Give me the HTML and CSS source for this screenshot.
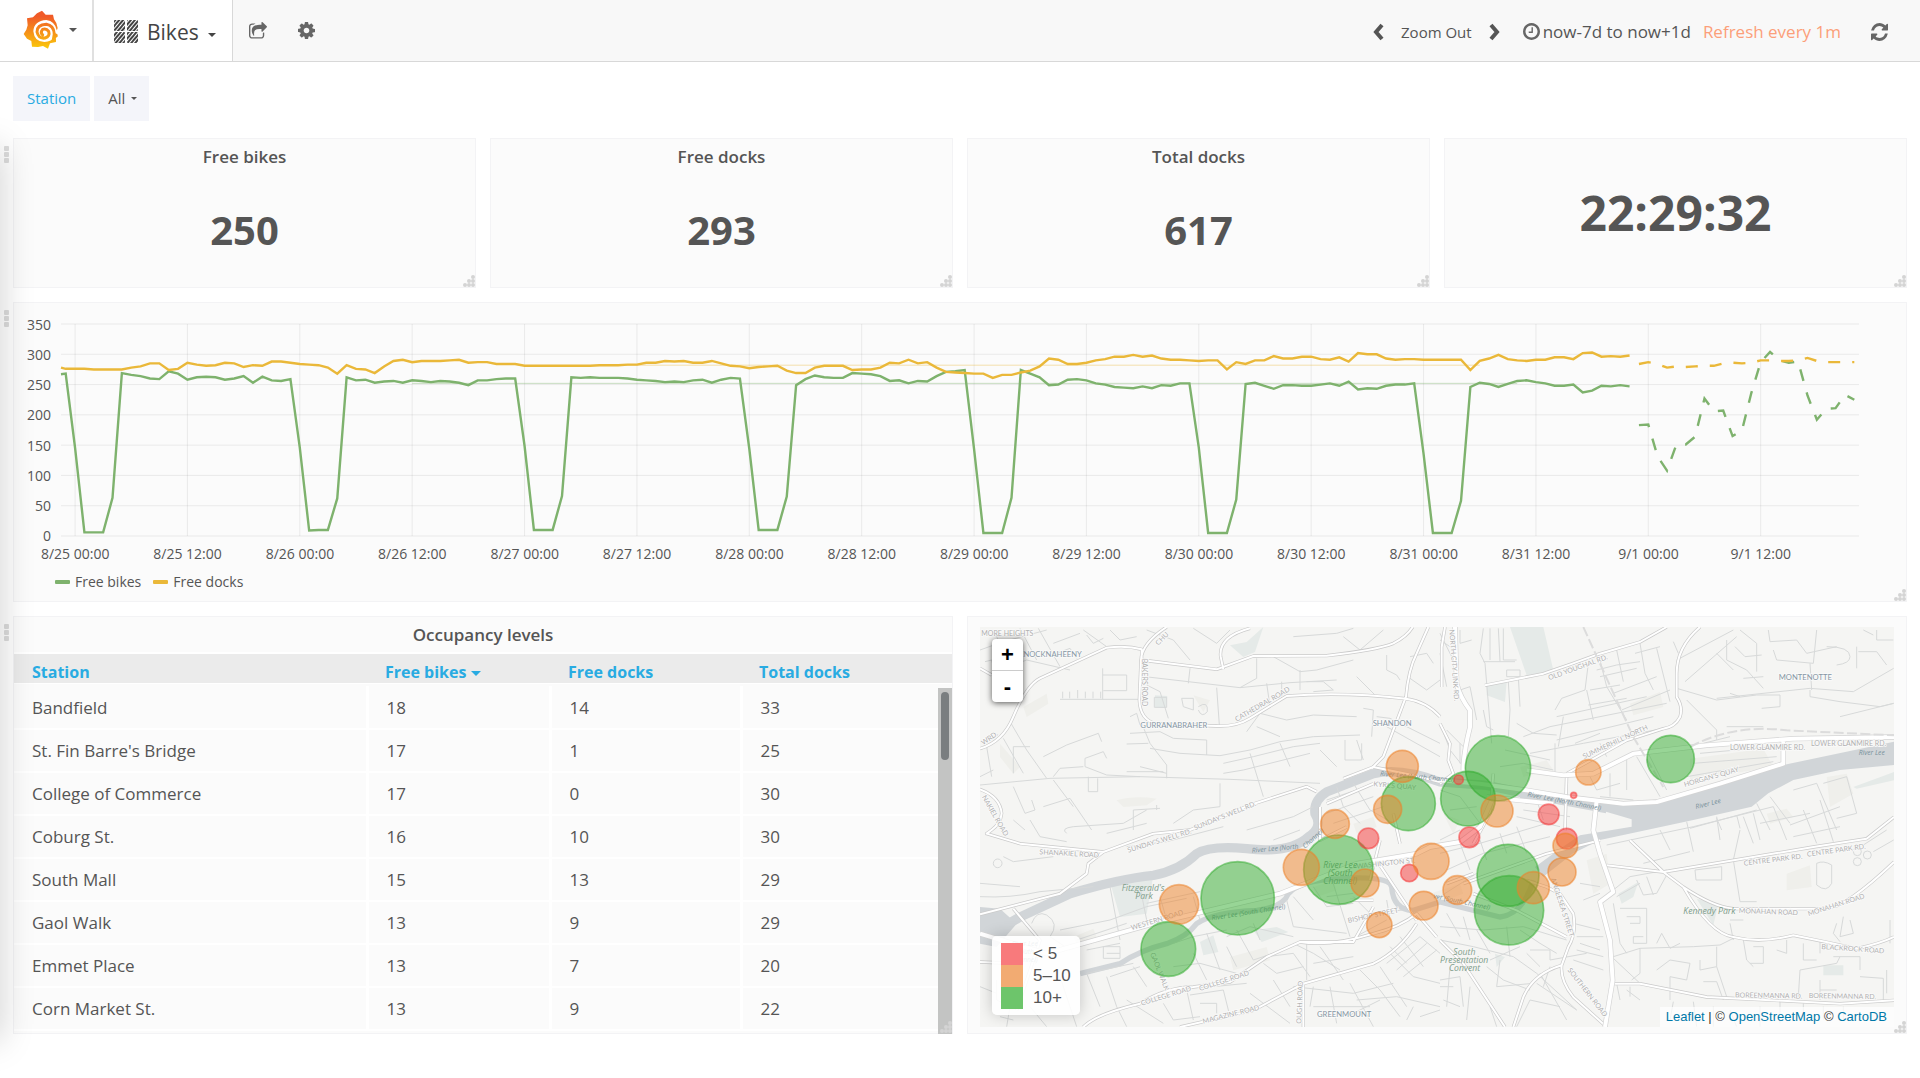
FILE: index.html
```html
<!DOCTYPE html>
<html lang="en">
<head>
<meta charset="utf-8">
<title>Bikes</title>
<link rel="stylesheet" href="styles.css">
</head>
<body>
<svg class="defs" width="0" height="0" aria-hidden="true">
  <defs>
    <symbol id="grip" viewBox="0 0 12 12"><g fill="#d4d4d4"><circle cx="2" cy="10" r="2"/><circle cx="6" cy="10" r="2"/><circle cx="10" cy="10" r="2"/><circle cx="6" cy="6" r="2"/><circle cx="10" cy="6" r="2"/><circle cx="10" cy="2" r="2"/></g></symbol>
    <linearGradient id="flame" x1="0" y1="0" x2="0" y2="1"><stop offset="0.15" stop-color="#f05a28"/><stop offset="1" stop-color="#fbca0a"/></linearGradient>
    <linearGradient id="swirl" gradientUnits="userSpaceOnUse" x1="0" y1="30" x2="0" y2="144"><stop offset="0.15" stop-color="#f05a28"/><stop offset="1" stop-color="#fbca0a"/></linearGradient>
    <pattern id="hatch" width="3" height="3" patternUnits="userSpaceOnUse" patternTransform="rotate(40)"><rect width="2" height="3" fill="#444"/></pattern>
  </defs>
</svg>

<header class="navbar">
  <button class="nav-logo" type="button" aria-label="Main menu">
    <svg width="36" height="39" viewBox="70 28 108 117">
      <path fill="url(#flame)" d="M127 30L138 42L160 42L163 56Q173 68 174 82L169 97L174 107L168 112L169 124L151 128L145 144L130 136L115 139L97 138L95 121L82 114L72 100L80 87L84 74L82 53L100 50L112 38Z"/>
      <path fill="#fff" d="M171 88Q166 62 140 58Q103 60 101 92Q104 124 134 124Q156 124 165 107L176 98Z"/>
      <path fill="none" stroke="url(#swirl)" stroke-width="9" stroke-linecap="round" d="M164 100Q162 74 140 71Q112 72 112 94Q117 115 136 112Q152 107 147 92Q140 82 129 86Q121 96 129 103"/>
      <path fill="url(#swirl)" d="M160 96L173 100L174 107L168 112L169 122L156 120Z"/>
    </svg>
    <span class="caret"></span>
  </button>
  <button class="nav-board" type="button">
    <svg width="24" height="24" viewBox="0 0 24 24"><g fill="url(#hatch)"><rect width="11" height="11" rx="1"/><rect x="13" width="11" height="11" rx="1"/><rect y="12" width="11" height="11" rx="1"/><rect x="13" y="12" width="11" height="11" rx="1"/></g></svg>
    <span>Bikes</span><span class="caret"></span>
  </button>
  <button class="nav-icon" type="button" aria-label="Share">
    <svg width="18" height="18" viewBox="0 0 1664 1664"><path d="M1408 989v259q0 119-84 203t-204 85h-832q-119 0-203-85t-85-203v-832q0-119 85-203t203-85h255q13 0 23 10t9 22q0 27-26 32-77 26-133 60-10 4-16 4h-112q-66 0-113 47t-47 113v832q0 66 47 113t113 47h832q66 0 113-47t47-113v-214q0-19 18-29 28-13 54-37 16-16 35-8 21 9 21 31zM1645 493l-384 384q-18 19-45 19-12 0-25-5-39-17-39-59v-192h-160q-323 0-438 131-119 137-74 473 3 23-20 34-8 2-12 2-16 0-26-13-10-14-21-31t-40-69-49-99-39-114-17-122q0-49 3-91t14-90 28-88 47-82 69-74 94-61 125-49 159-30 197-11h160v-192q0-42 39-59 13-5 25-5 26 0 45 19l384 384q19 19 19 45t-19 45z"/></svg>
  </button>
  <button class="nav-icon" type="button" aria-label="Settings">
    <svg width="17" height="17" viewBox="0 -128 1536 1536"><path fill-rule="evenodd" d="M1024 640q0 106-75 181t-181 75-181-75-75-181 75-181 181-75 181 75 75 181zM1536 531v222q0 12-8 23t-20 13l-185 28q-19 54-39 91 35 50 107 138 10 12 10 25t-9 23q-27 37-99 108t-94 71q-12 0-26-9l-138-108q-44 23-91 38-16 136-29 186-7 28-36 28h-222q-14 0-24.500-8.500t-11.500-21.500l-28-184q-49-16-90-37l-141 107q-10 9-25 9-14 0-25-11-126-114-165-168-7-10-7-23 0-12 8-23 15-21 51-66.500t54-70.500q-27-50-41-99l-183-27q-13-2-21-12.500t-8-23.500v-222q0-12 8-23t19-13l186-28q14-46 39-92-40-57-107-138-10-12-10-24 0-10 9-23 26-36 98.500-107.500t94.500-71.500q13 0 26 10l138 107q44-23 91-38 16-136 29-186 7-28 36-28h222q14 0 24.500 8.500t11.500 21.500l28 184q49 16 90 37l142-107q9-9 24-9 13 0 25 10 129 119 165 170 7 8 7 22 0 12-8 23-15 21-51 66.500t-54 70.500q26 50 41 98l183 28q13 2 21 12.500t8 23.500z"/></svg>
  </button>
  <div class="time-controls">
    <button type="button" aria-label="Back"><svg width="11" height="18" viewBox="0 0 11 18"><path class="chevron" d="M9 2L3 9l6 7"/></svg></button>
    <button class="zoom-out" type="button">Zoom Out</button>
    <button type="button" aria-label="Forward"><svg width="11" height="18" viewBox="0 0 11 18"><path class="chevron" d="M2 2l6 7-6 7"/></svg></button>
    <button class="range" type="button">
      <svg width="17" height="17" viewBox="0 128 1536 1536"><path d="M896 544v448q0 14-9 23t-23 9h-320q-14 0-23-9t-9-23v-64q0-14 9-23t23-9h224v-352q0-14 9-23t23-9h64q14 0 23 9t9 23zm416 352q0-148-73-273t-198-198-273-73-273 73-198 198-73 273 73 273 198 198 273 73 273-73 198-198 73-273zm224 0q0 209-103 385.500t-279.500 279.500-385.500 103-385.500-103-279.500-279.500-103-385.500 103-385.500 279.500-279.500 385.500-103 385.500 103 279.500 279.500 103 385.500z"/></svg>
      <span>now-7d to now+1d</span><span class="refresh-rate">Refresh every 1m</span>
    </button>
    <button class="refresh" type="button" aria-label="Refresh"><svg width="17" height="18" viewBox="0 0 1536 1536" preserveAspectRatio="none"><path d="M1511 928q0 5-1 7-64 268-268 434.500t-478 166.500q-146 0-282.500-55t-243.500-157l-129 129q-19 19-45 19t-45-19-19-45v-448q0-26 19-45t45-19h448q26 0 45 19t19 45-19 45l-137 137q71 66 161 102t187 36q134 0 250-65t186-179q11-17 53-117 8-23 30-23h192q13 0 22.500 9.500t9.500 22.500zm25-800v448q0 26-19 45t-45 19h-448q-26 0-45-19t-19-45 19-45l138-138q-148-137-349-137-134 0-250 65t-186 179q-11 17-53 117-8 23-30 23h-199q-13 0-22.500-9.500t-9.500-22.500v-7q65-268 270-434.500t480-166.500q146 0 284 55.500t245 156.500l130-129q19-19 45-19t45 19 19 45z"/></svg></button>
  </div>
</header>

<main class="dashboard">
  <div class="submenu">
    <span class="filter-label" id="station-label">Station</span>
    <button class="filter-value" type="button" aria-labelledby="station-label">All <span class="caret small"></span></button>
  </div>

  <section class="row">
    <div class="handle"><i></i><i></i><i></i></div>
    <article class="panel stat"><h2>Free bikes</h2><p>250</p><svg class="grip"><use href="#grip"/></svg></article>
    <article class="panel stat"><h2>Free docks</h2><p>293</p><svg class="grip"><use href="#grip"/></svg></article>
    <article class="panel stat"><h2>Total docks</h2><p>617</p><svg class="grip"><use href="#grip"/></svg></article>
    <article class="panel clock"><p>22:29:32</p><svg class="grip"><use href="#grip"/></svg></article>
  </section>

  <section class="row">
    <div class="handle"><i></i><i></i><i></i></div>
    <article class="panel graph">
      <div class="plot">
        <div class="y-axis"><span>350</span><span>300</span><span>250</span><span>200</span><span>150</span><span>100</span><span>50</span><span>0</span></div>
        <svg class="chart" viewBox="0 0 192 350" preserveAspectRatio="none">
          <g transform="translate(1.5 350) scale(1 -1)">
            <path class="gridline" d="M-1.500 0H190.500M-1.500 50H190.500M-1.500 100H190.500M-1.500 150H190.500M-1.500 200H190.500M-1.500 250H190.500M-1.500 300H190.500M-1.500 350H190.500M0 0V350M12 0V350M24 0V350M36 0V350M48 0V350M60 0V350M72 0V350M84 0V350M96 0V350M108 0V350M120 0V350M132 0V350M144 0V350M156 0V350M168 0V350M180 0V350"/>
            <path class="trend bikes" d="M36 252H154"/>
            <path class="trend docks" d="M58 282H150"/>
            <polyline class="series bikes" points="-1.500,267 -1,268 0,146 1,6 3,6 4,63 5,269 6,266 7,264 8,260 9,259 10,272 11,268 12,258 13,262 14,263 15,262 16,258 17,260 18,264 19,253 20,263 21,257 22,256 23,259 24,146 25,9 26,10 27,10 28,62 29,262 30,257 31,258 32,253 33,255 34,256 35,253 36,257 37,256 38,254 39,256 40,255 41,253 42,249 43,257 44,257 45,259 46,260 47,260 48,149 49,10 51,10 52,66 53,262 54,261 55,262 56,261 57,261 58,261 59,260 60,258 61,257 62,256 63,254 64,255 65,254 66,257 67,258 68,253 69,258 70,261 71,260 72,144 73,10 75,10 76,65 77,249 78,259 79,265 80,262 81,261 82,261 83,269 84,268 85,267 86,264 87,256 88,257 89,252 90,256 91,255 92,264 93,271 94,272 95,274 96,144 97,5 99,5 100,63 101,274 102,268 103,262 104,249 105,250 106,258 107,259 108,257 109,252 110,250 111,246 112,245 113,244 114,247 115,244 116,249 117,248 118,252 119,252 120,146 121,5 123,5 124,60 125,251 126,253 127,248 128,243 129,249 130,249 131,248 132,248 133,250 134,252 135,248 136,255 137,242 138,244 139,243 140,248 141,250 142,250 143,252 144,136 145,5 147,5 148,58 149,246 150,253 151,251 152,246 153,251 154,256 155,257 156,254 157,252 158,248 159,248 160,250 161,237 162,240 163,248 164,247 165,249 166,247"/>
            <polyline class="series docks" points="-1.500,278 -1,276 0,276 1,276 2,275 5,275 6,278 7,280 8,285 9,285 10,274 11,276 12,286 13,283 14,281 15,282 16,286 17,285 18,279 19,282 20,281 21,288 22,288 23,286 24,284 25,283 26,282 27,278 28,268 29,282 30,276 31,275 32,269 33,280 34,289 35,291 36,287 37,289 38,289 39,289 40,290 41,291 42,286 43,287 44,287 45,284 46,284 47,284 48,281 49,281 55,281 56,282 58,282 59,283 60,283 61,286 62,286 63,289 64,288 65,289 66,286 67,286 68,289 69,285 70,281 71,280 72,277 73,279 74,280 75,281 76,273 77,269 78,269 79,278 80,281 82,281 83,274 84,275 85,275 86,278 87,286 88,285 89,291 90,285 91,287 92,278 93,271 94,270 95,269 96,268 97,268 98,261 99,266 100,266 101,270 102,273 103,280 104,293 105,291 106,284 107,284 108,286 109,290 110,292 111,296 112,296 113,299 114,296 115,298 116,293 117,291 118,291 119,290 120,289 121,290 122,290 123,275 124,287 125,284 126,290 127,290 128,297 129,293 130,293 131,296 132,296 133,292 134,291 135,295 136,288 137,302 138,300 139,300 140,293 141,291 142,292 143,292 144,291 148,291 149,274 150,289 151,293 152,299 153,292 154,290 155,289 156,291 157,291 158,295 159,295 160,292 161,302 162,303 163,296 164,297 165,296 166,298"/>
            <polyline class="series bikes forecast" points="167,183 168,184 169,131 170,108 171,151 172,151 173,164 174,227 175,206 176,207 177,165 178,174 179,236 180,287 181,304 182,290 183,286 184,288 185,232 186,192 187,210 188,211 189,233 190,225"/>
            <polyline class="series docks forecast" points="167,284 168,287 169,284 170,278 171,280 172,279 173,280 174,281 175,281 176,285 177,286 178,285 179,286 180,290 181,290 182,289 183,289 184,290 185,294 186,289 187,287 188,287 189,287 190,287"/>
          </g>
        </svg>
      </div>
      <div class="x-axis"><span>8/25 00:00</span><span>8/25 12:00</span><span>8/26 00:00</span><span>8/26 12:00</span><span>8/27 00:00</span><span>8/27 12:00</span><span>8/28 00:00</span><span>8/28 12:00</span><span>8/29 00:00</span><span>8/29 12:00</span><span>8/30 00:00</span><span>8/30 12:00</span><span>8/31 00:00</span><span>8/31 12:00</span><span>9/1 00:00</span><span>9/1 12:00</span></div>
      <ul class="legend"><li class="bikes">Free bikes</li><li class="docks">Free docks</li></ul>
      <svg class="grip"><use href="#grip"/></svg>
    </article>
  </section>

  <section class="row">
    <div class="handle"><i></i><i></i><i></i></div>
    <article class="panel occupancy">
      <h2>Occupancy levels</h2>
      <div class="table-area">
        <table>
          <colgroup><col class="c-station"><col class="c-bikes"><col class="c-docks"><col class="c-total"></colgroup>
          <thead><tr><th scope="col">Station</th><th scope="col">Free bikes <span class="caret sort"></span></th><th scope="col">Free docks</th><th scope="col">Total docks</th></tr></thead>
          <tbody>
            <tr><td>Bandfield</td><td>18</td><td>14</td><td>33</td></tr>
            <tr><td>St. Fin Barre's Bridge</td><td>17</td><td>1</td><td>25</td></tr>
            <tr><td>College of Commerce</td><td>17</td><td>0</td><td>30</td></tr>
            <tr><td>Coburg St.</td><td>16</td><td>10</td><td>30</td></tr>
            <tr><td>South Mall</td><td>15</td><td>13</td><td>29</td></tr>
            <tr><td>Gaol Walk</td><td>13</td><td>9</td><td>29</td></tr>
            <tr><td>Emmet Place</td><td>13</td><td>7</td><td>20</td></tr>
            <tr><td>Corn Market St.</td><td>13</td><td>9</td><td>22</td></tr>
          </tbody>
        </table>
        <div class="scrollbar"><div class="thumb"></div></div>
      </div>
      <svg class="grip"><use href="#grip"/></svg>
    </article>

    <article class="panel map-panel">
      <div class="map">
        <svg class="tiles" viewBox="0 0 2742 1200" preserveAspectRatio="xMidYMid slice">
          <!-- parks and buildings -->
          <g class="park">
            <path d="M800 45L850 0L825 75L790 90L750 55ZM1590 0H1690L1720 130L1640 145ZM1520 170L1580 165L1575 225L1520 205ZM525 205L562 207L558 243L525 240ZM390 765L520 745L500 860L420 870ZM820 910L890 900L925 915L845 945ZM2150 815L2215 830L2200 895ZM2530 1015H2590V1045H2530ZM1915 800L1975 765L1960 810L1925 830ZM660 945L700 925L715 975L670 985ZM1545 980L1575 990L1550 1020ZM2620 480L2742 435V460L2630 485Z"/>
          </g>
          <g class="building">
            <path d="M130 240L200 200L205 230L140 270ZM410 520Q460 505 530 515L500 535L430 540ZM640 205L690 220L670 255ZM2420 740L2490 715L2495 780L2420 790ZM1820 700L1880 680L1890 770L1840 800ZM2540 450L2600 440L2620 500L2550 540ZM2360 560L2420 545L2440 570L2370 590ZM1950 230L2040 195L2050 240L1960 265ZM1000 780L1060 760L1070 790L1010 810ZM750 990L860 960L870 1000L760 1030ZM280 930L340 905L350 930L290 955ZM1120 590L1180 570L1190 600L1130 620ZM1390 560L1440 580L1420 620ZM1350 800L1440 770L1450 800L1370 830ZM1620 420L1700 400L1720 430L1630 450ZM60 350L120 420L100 440L60 390ZM2130 395L2350 365L2380 420L2130 460Z"/>
          </g>
          <!-- river Lee -->
          <g class="river">
            <path class="channel" d="M0 905Q50 915 120 870L270 800Q420 755 520 745Q600 730 650 680Q690 655 800 665Q930 680 985 630Q1030 600 1005 560Q1000 520 1040 495L1180 440Q1260 420 1380 465L1520 475L1640 500L1880 545"/>
            <path class="creek" d="M300 1040L420 1010Q480 970 560 950Q620 930 650 890Q700 855 830 850Q910 840 925 800Q960 760 1080 755Q1230 745 1235 780Q1240 850 1300 850L1380 825L1560 870Q1630 860 1660 760"/>
            <path class="basin" d="M1620 490L1860 519L1940 534L2030 527L2220 474L2410 414L2742 344V414L2580 429L2440 459L2365 499L2315 539L2140 579L1860 639L1780 679L1690 749L1665 720L1740 665L1800 625L1955 599V577L1860 549L1620 515ZM0 840L60 845L110 890L50 960L0 950Z"/>
          </g>
          <!-- local streets -->
          <g class="street">
            <g transform="translate(-60 -51)">
              <path d="M60 120L130 95L260 60M100 60L150 160M180 55L230 150M235 55L300 170M280 100L360 70M290 130L330 115L350 145M370 60L440 110M380 75L400 100L430 85M75 155L95 150L100 170M120 180L200 150L330 180M300 268H535M308 245V265M329 245V265M353 240V265M376 245V265M399 245V265M422 245V265M428 175V268M428 195H500V242H430M555 200L840 233L990 218L1130 210M690 175L685 220M770 233L778 345M840 233L890 205V145M920 220L930 290M965 215V265M560 225L600 245L625 325M583 262H620V292H583ZM665 265H700V300L670 290ZM715 290Q745 270 742 305Q725 325 715 300M545 340L570 400L620 465V505M510 370L600 365L640 385L740 390V435M500 402L565 400M510 320L530 310L540 345M150 335L200 420L260 505M60 525L270 505L540 500L810 508L1080 520M130 385L190 490M80 410L95 500M250 440L320 405L415 370L425 395M375 445L430 425L440 445M375 445V470L440 495L540 500M280 500L300 475L370 470M570 415L660 430L780 437L870 420L960 395L1060 380L1200 375M790 460L880 440L1000 410L1080 400M790 490L850 480L1050 430M870 430L910 560M960 400L990 470M860 365L900 310L980 330L1060 315L1190 320M890 350L960 380M1020 180V240M940 140L1020 185L1070 180L1180 150M1040 215H1090L1120 240L1060 245M1000 80L1130 70L1180 55M1150 80L1200 120L1270 60M1280 135V180L1310 195L1320 210M1190 200L1250 260M1350 140L1400 130L1420 160M1350 205L1400 240L1440 210M1210 295L1240 300L1235 380M1250 320L1290 325L1340 350L1440 400M1280 350L1440 440M1190 390L1210 450M1080 420L1130 470M1155 390V450H1205V400M160 530L195 610L225 600L215 570M250 590L330 565L395 660M280 510L340 590M385 500V545H413V505M520 660V600L600 595M590 585V600M640 640L700 600L780 590V520M60 500L100 480M160 490V410H210M700 55L770 100L810 60M560 60L640 90L690 150M450 60L480 90L530 80M540 470L620 490M500 485L610 485M1130 530L1150 590L1200 640M1180 520L1230 600L1300 640M1100 570L1220 530M1100 610L1240 560M1120 640L1270 590"/>
            </g>
            <g transform="translate(1380 -51)">
              <path d="M0 90L30 110M60 60V100L95 90M130 55L120 130L135 160L140 220L155 400M150 55V150M175 55L180 155M190 55V150H230M130 155H225M200 180H240V200H200ZM205 215L210 300L205 380M235 200L240 290M445 160L435 240L365 265L345 300M470 180L530 165L600 155M480 200L590 175M530 120L550 215M600 100L615 190L640 240M650 115L690 275M480 150L500 230L560 330M585 130L660 110M520 250L650 200M545 300L690 240M450 240L540 225M445 285L560 265M440 240L460 330M350 320L620 260M330 350L680 280M350 390L640 320M250 380L330 350M230 340L280 370L350 375M270 430L430 400L700 350M370 320L355 410M345 400V490M405 400L480 370M480 400L500 440M735 215L890 80M710 235L830 270L950 255H1020V290L965 295M710 150L880 60M740 270L830 360V390M700 95L715 130M860 90V150L920 180L970 235M885 110L915 140L965 135M830 130L880 180M900 60L950 100V185M910 205L970 200M985 60L990 95L1070 90M1000 120L1010 150L1120 160L1130 60M1070 90L1100 130L1190 110M1160 110Q1230 110 1230 140Q1230 160 1190 165M1250 110V175M1255 125H1310L1340 165M1270 60L1300 75M1310 60V90H1360M830 265L1110 235L1240 245L1361 175M1110 240V260L1200 275L1320 290L1361 280M1200 320L1361 280M1110 160L1115 240M870 250L900 260M790 400L870 380M860 350L970 350M780 430L1000 410M760 460L1010 440M740 500L1000 455M620 420L680 540M590 440L660 560M560 450V540M510 490V560M450 500L470 540L540 520M480 560L580 570M950 580L990 660M990 560L1050 640M1060 540L1130 520L1190 660M1150 520L1220 500L1250 610L1190 625M1050 645L1200 590M750 655L950 600M830 625L845 660M890 615L900 655M0 70L40 150M0 130L20 230M60 240L90 230L110 330M0 340L30 420L70 470M20 360L80 420M60 400V460M130 300L140 350L160 360M180 470L250 460L340 480M195 420L330 450M0 540L60 560L120 640M30 600L110 590M250 600L390 620M230 620L360 650M290 570L310 630"/>
            </g>
            <g transform="translate(-60 579)">
              <path d="M60 230Q150 235 240 215L400 200M60 190L180 200M130 110L160 125L280 110M100 130a13 13 0 1 0 26 0a13 13 0 1 0 -26 0M210 0L240 50L320 65M320 40Q300 25 340 20L490 10L560 -30M160 0L195 30M440 40L560 10M500 80L620 65L790 20M215 310Q230 270 260 285Q300 310 270 350L330 390M300 330L450 300L560 260L680 235M350 360L500 310M450 200L480 360M380 390L480 370M430 380H480V415H430ZM440 400H480M540 200L560 300M600 230L620 300M700 230L720 300M560 250L720 215M300 470L330 560L350 620M380 460L420 560M440 470L470 560L500 620M450 470L540 440M520 440L560 500M110 480V540L150 560L140 620M60 500L110 520M120 590L160 600M210 560L260 620M380 460L520 430M500 540L610 610M610 550L640 600L720 590M680 510L700 600M690 525L790 510L810 590M720 550H770V580M760 500L860 490M640 440L720 430L830 460M700 400L740 480M740 340L780 450M800 380L830 440M830 330L880 420L940 400M640 370L700 350L800 330M800 350L870 320L1000 350M880 310L900 360M910 430L950 460L1030 440M920 410L1000 400L1050 470M1000 370L1060 400L1140 450M1040 370V480M1080 380L1150 480M1060 430L1180 410M940 480L990 560M870 520L990 610M1000 500L1180 520L1300 490M1060 500L1050 560M1060 560H1230M1110 500L1130 610M1170 490L1240 620M1190 540L1310 530L1440 560M1160 590L1260 540M1200 450L1260 510L1320 590M1260 440L1340 560M1290 400L1360 470L1440 490M1280 430L1380 350L1440 400M1310 450L1400 370M1330 470L1430 390M1290 380L1340 430M1320 350L1390 440M1180 230L1230 280L1330 270M1150 370L1280 300M1380 590L1440 570M1340 600L1360 560M980 240L1000 320L1160 340M1000 230L1060 300M1060 200L1100 260L1180 250M1280 240L1290 300M1100 230L1180 220M1110 160L1170 350M860 30L1000 -10L1060 -40M940 60L1020 30"/>
            </g>
            <g transform="translate(1380 579)">
              <path d="M0 60L60 30M0 100L120 70L320 10M20 150L130 100L330 50M0 230L110 160M60 70L90 150M120 60L140 120M180 40L200 100M230 20L260 100M0 320L130 330L250 320L380 360M20 280L60 350M70 290L90 360M0 360L100 380L220 410L290 460L410 570M110 330L150 400M150 420L240 380M140 440L190 480L270 510M180 420L170 500L280 490M200 320L210 410M240 330L300 370L350 400M260 400L300 440M270 390H330V420M330 420L440 400M310 500L330 440M0 480L60 470L70 560M0 500L40 500M10 540L60 560M30 440L20 560M90 500L80 600M150 560L170 620M300 460L380 600M290 490L410 570M230 620L270 540L360 560M410 350H490M420 370L480 390M400 310L480 330M400 420L490 450M410 390L490 410M420 190L480 200M430 240L480 220M520 210L570 170L680 150M530 230L600 190M590 180L610 225L650 220L680 165M620 170L640 225M520 250L540 370L560 400M540 265H620V370H580V350H610M560 290H600V310H570M580 65L670 150M500 75L760 20L1000 -40M610 130L750 95M660 30L690 90M740 5L760 95M830 -10L840 60M765 150L845 140V180H768ZM880 120L900 245H950M880 120L900 30M910 -10L940 70M940 -20L960 60M1000 -40L1040 60M1090 -30L1130 70M1140 -60L1180 65M960 10L1110 -20M1060 50L1200 20M1130 130Q1150 120 1175 135V190Q1160 220 1130 195ZM1240 95a12 12 0 1 0 24 0a12 12 0 1 0 -24 0M1240 125a12 12 0 1 0 24 0a12 12 0 1 0 -24 0M1270 105a12 12 0 1 0 24 0a12 12 0 1 0 -24 0M1270 75L1340 30M1300 95L1361 60M600 385L760 380L840 375L880 355M600 385V460L575 480M520 410L600 385M520 415L600 490M650 450L690 420L750 430L740 480L690 470V540M780 420V450L830 440M700 545L690 600M790 485H830L850 540M830 380V440L860 530M650 370L665 340L690 385L720 370M910 360L920 420L940 440M940 380H970V430H930M1040 360V400L1010 390M1090 370V420H1130M1140 360V400M1080 450L1075 530M1080 450L1190 430L1200 410M1180 410H1260V450M1260 470L1330 475V540M1340 450V520M1140 480V540M1190 510H1140M870 300H910M880 360L870 310M1190 310L1180 340L1200 365M1210 290L1200 350L1240 340L1230 300M1350 300V370M760 545L770 620M820 560V620M870 570L890 620M960 560V620M1020 545V610M1090 550V600M1150 560V600M1210 560V600M560 510L600 540M570 500V530M530 490L540 540"/>
            </g>
          </g>
          <!-- main roads: casing first, surface above it -->
          <defs>
            <g id="roads">
              <path d="M0 365Q70 344 100 269Q140 174 180 154L380 62Q440 54 485 67L485 99L710 127L820 87L1040 86Q1190 69 1240 49Q1280 29 1298 0M560 0Q485 49 483 99L478 219Q480 279 530 291L710 297Q770 299 810 274L920 207Q1090 194 1278 215Q1340 224 1380 269M810 4Q715 29 722 89L730 127M1345 0L1310 79Q1285 129 1278 209L1210 389L1175 424M0 124L35 144M0 487Q60 509 65 559Q62 589 35 609L20 620L120 650L370 675L520 620L630 609L810 534L980 479L1010 494M370 675L325 710L320 740L240 800L0 862"/>
              <path d="M1515 175L1690 140Q1780 110 1860 80L1980 45L2060 0M2160 0Q2090 60 2090 140V210Q2110 240 2100 270Q2085 300 2050 305L1940 340L1760 440M1385 180V60L1395 0M1380 290L1410 350L1405 400L1420 440L1380 470M1760 440L1755 610M1540 440L1530 560L1480 650"/>
              <path d="M100 845L180 940L110 1150M0 1005L120 1010M310 1200Q350 1160 480 1130Q560 1080 640 1080L750 1065L860 990L960 945L1120 945L1180 840M960 945Q1050 960 1180 920Q1260 900 1310 860L1370 930M600 1200L820 1150L970 1070L1180 1010Q1260 970 1310 890M970 1070V1200M1380 940L1450 1010L1575 1200M1190 700L1310 880M1180 820H1110M1480 800L1610 850L1760 930M1640 760L1700 780L1740 800L1780 860Q1790 920 1765 960L1745 1015Q1740 1060 1780 1110L1880 1200M1745 1015Q1660 1040 1630 1110L1600 1200M1880 715L2050 735L2500 660L2660 635L2742 570M2050 735L2110 780Q2200 840 2260 845H2540Q2600 840 2742 705M1950 640L2050 735M2110 780Q2190 920 2260 930Q2340 950 2440 925Q2540 945 2630 965Q2700 950 2742 930M1900 1070L1980 1070L2180 1110L2580 1130L2742 1120M1450 770L1700 680L1860 640M1400 770L1480 740"/>
              <path d="M1090 455L1180 420L1300 445L1380 465M1040 530L1110 500L1180 470M1020 540V640L1100 600M1240 560L1260 650M1200 640L1170 760"/>
            </g>
            <g id="trunk">
              <path d="M1425 0L1430 170Q1440 210 1470 250V300Q1450 380 1450 430M0 920L200 980L520 890L900 800L1130 710L1310 680L1350 660L1440 645L1500 600L1540 510M1640 430L1750 445L1840 440L1960 380L2180 355L2440 335L2742 330M1380 460L1500 470L1640 490L1760 510L1930 530L2030 525L2220 470L2410 410V340M1520 510L1720 530M1850 520L1840 610L1860 680L1900 795L1860 825L1890 940L1898 1060L1875 1200"/>
            </g>
          </defs>
          <use class="road-casing" href="#roads"/><use class="road-surface" href="#roads"/>
          <use class="trunk-casing" href="#trunk"/><use class="trunk-surface" href="#trunk"/>
          <path class="railway" d="M1810 0L1960 330L2050 480M2130 360Q2260 290 2420 310L2742 325"/>
          <!-- place and street names -->
          <g class="place">
            <text x="115" y="90">KNOCKNAHEENY</text><text x="481" y="303">GURRANABRAHER</text><text x="1178" y="298">SHANDON</text><text x="2396" y="159">MONTENOTTE</text><text x="1011" y="1170">GREENMOUNT</text>
          </g>
          <g class="street-name">
            <text x="4" y="26">MORE HEIGHTS</text>
            <text transform="translate(486 95) rotate(90)">BAKERS ROAD</text>
            <text transform="translate(770 284) rotate(-30)">CATHEDRAL ROAD</text>
            <text transform="translate(645 610) rotate(-22)">SUNDAY'S WELL RD.</text>
            <text transform="translate(445 677) rotate(-17)">SUNDAY'S WELL RD.</text>
            <text transform="translate(178 682) rotate(3)">SHANAKIEL ROAD</text>
            <text transform="translate(5 510) rotate(60)">NAKIEL ROAD</text>
            <text transform="translate(10 355) rotate(-35)">WRD.</text>
            <text transform="translate(535 56) rotate(-45)">CHU</text>
            <text transform="translate(455 910) rotate(-17)">WESTERN ROAD</text>
            <text transform="translate(1180 478) rotate(5)">KYRL'S QUAY</text>
            <text transform="translate(1130 725) rotate(-6)">WASHINGTON ST.</text>
            <text transform="translate(1105 888) rotate(-12)">BISHOP STREET</text>
            <text transform="translate(485 1136) rotate(-17)">COLLEGE ROAD</text>
            <text transform="translate(660 1092) rotate(-18)">COLLEGE ROAD</text>
            <text transform="translate(510 980) rotate(68)">GAOL WALK</text>
            <text transform="translate(670 1190) rotate(-14)">MAGAZINE ROAD</text>
            <text transform="translate(964 1190) rotate(-88)">OUGH ROAD</text>
            <text transform="translate(1408 8) rotate(86)">NORTH CITY LINK RD.</text>
            <text transform="translate(1708 160) rotate(-20)">OLD YOUGHAL RD.</text>
            <text transform="translate(1812 396) rotate(-25)">SUMMERHILL NORTH</text>
            <text x="2250" y="370">LOWER GLANMIRE RD.</text><text x="2493" y="358">LOWER GLANMIRE RD.</text>
            <text transform="translate(2114 480) rotate(-16)">HORGAN'S QUAY</text>
            <text transform="translate(2292 716) rotate(-7)">CENTRE PARK RD.</text>
            <text transform="translate(2482 689) rotate(-8)">CENTRE PARK RD.</text>
            <text transform="translate(2276 858) rotate(2)">MONAHAN ROAD</text>
            <text transform="translate(2486 868) rotate(-18)">MONAHAN ROAD</text>
            <text transform="translate(2524 966) rotate(4)">BLACKROCK ROAD</text>
            <text transform="translate(2265 1111) rotate(1)">BOREENMANNA RD.</text>
            <text transform="translate(2486 1113) rotate(1)">BOREENMANNA RD.</text>
            <text transform="translate(1712 755) rotate(72)">ANGLESEA STREET</text>
            <text transform="translate(1762 1030) rotate(52)">SOUTHERN ROAD</text>
          </g>
          <g class="water-name">
            <text transform="translate(1200 446) rotate(5)">River Lee (North Channel)</text>
            <text transform="translate(1642 508) rotate(11)">River Lee (North Channel)</text>
            <text transform="translate(2148 546) rotate(-14)">River Lee</text><text x="2636" y="383">River Lee</text>
            <text transform="translate(816 677) rotate(-5)">River Lee (North</text>
            <text transform="translate(975 665) rotate(-42)">Channel)</text>
            <text transform="translate(696 880) rotate(-9)">River Lee (South Channel)</text>
            <text transform="translate(1360 813) rotate(12)">ver (South Channel)</text>
            <text x="95" y="958">River Lee</text><text x="105" y="982">(South</text><text x="95" y="1006">Channel)</text>
          </g>
          <g class="park-name">
            <text x="425" y="791">Fitzgerald's</text><text x="466" y="815">Park</text><text x="1030" y="722">River Lee</text><text x="1044" y="747">(South</text><text x="1030" y="771">Channel)</text><text x="2110" y="861">Kennedy Park</text><text x="1420" y="983">South</text><text x="1380" y="1008">Presentation</text><text x="1407" y="1033">Convent</text>
          </g>
          <!-- stations -->
          <g class="marker full"><circle cx="1285" cy="530" r="81"/><circle cx="1554" cy="424" r="98"/><circle cx="1464" cy="515" r="82"/><circle cx="2072" cy="396" r="71"/><circle cx="1075" cy="728" r="104"/><circle cx="773" cy="814" r="110"/><circle cx="565" cy="966" r="82"/><circle cx="1584" cy="745" r="93"/><circle cx="1587" cy="850" r="104"/></g>
          <g class="marker low"><circle cx="1436" cy="458" r="14"/><circle cx="1781" cy="505" r="9"/><circle cx="1706" cy="562" r="31"/><circle cx="1165" cy="634" r="31"/><circle cx="1288" cy="738" r="26"/><circle cx="1468" cy="631" r="31"/><circle cx="1760" cy="635" r="31"/></g>
          <g class="marker mid"><circle cx="1267" cy="418" r="48"/><circle cx="1223" cy="547" r="42"/><circle cx="1065" cy="591" r="43"/><circle cx="1551" cy="552" r="48"/><circle cx="1825" cy="436" r="38"/><circle cx="964" cy="721" r="54"/><circle cx="1155" cy="768" r="42"/><circle cx="1353" cy="703" r="54"/><circle cx="1432" cy="789" r="43"/><circle cx="1331" cy="836" r="43"/><circle cx="1198" cy="894" r="38"/><circle cx="597" cy="832" r="59"/><circle cx="1660" cy="782" r="48"/><circle cx="1746" cy="735" r="42"/><circle cx="1756" cy="656" r="37"/></g>
        </svg>
        <div class="zoom"><button type="button" aria-label="Zoom in">+</button><button type="button" aria-label="Zoom out">-</button></div>
        <ul class="map-legend"><li class="low">&lt; 5</li><li class="mid">5–10</li><li class="full">10+</li></ul>
        <div class="attribution"><a href="#leaflet">Leaflet</a> | © <a href="#osm">OpenStreetMap</a> © <a href="#cartodb">CartoDB</a></div>
      </div>
      <svg class="grip"><use href="#grip"/></svg>
    </article>
  </section>
</main>
<div class="side-shadow"></div>
</body>
</html>
```

FILE: styles.css
```css
* { box-sizing: border-box; }

body {
  position: relative;
  min-height: 100vh;
  margin: 0;
  overflow-x: hidden;
  background: #fff;
  color: #555;
  font: 17px/22px "Open Sans", sans-serif;
}

h2, p, ul { margin: 0; padding: 0; }
ul { list-style: none; }

button {
  display: flex;
  align-items: center;
  margin: 0;
  padding: 0;
  border: 0;
  background: none;
  color: inherit;
  font: inherit;
}

.defs { position: absolute; }

.caret {
  display: inline-block;
  border: 4px solid transparent;
  border-top-color: currentColor;
  border-bottom: 0;
  vertical-align: middle;
}

/* top bar */
.navbar {
  display: flex;
  height: 62px;
  border-bottom: 1px solid #d8d8d8;
  background: #f8f8f8;
  fill: #666;
}
.nav-logo {
  gap: 10px;
  width: 94px;
  padding: 0 0 2px 23px;
  border-right: 2px solid #e0e0e0;
  background: #fff;
}
.nav-board {
  width: 139px;
  gap: 9px;
  padding: 2px 0 0 20px;
  border-right: 1px solid #d8d8d8;
  background: #fff;
  color: #444;
  font-size: 21px;
}
.nav-board .caret { margin-top: 6px; }
.nav-icon { padding: 0 0 0 16px; }
.nav-icon + .nav-icon { padding-left: 31px; }

.time-controls {
  display: flex;
  margin-left: auto;
  padding: 2px 32px 0 0;
}
.zoom-out { padding: 0 17px; font-size: 15px; }
.chevron { fill: none; stroke: #555; stroke-width: 4; }
.range { gap: 3px; margin-left: 23px; font-size: 17px; }
.refresh-rate { padding-left: 9px; color: #fc9f7a; }
.refresh { margin-left: 30px; }

/* dashboard grid */
.dashboard { padding: 14px 13px 43px 0; }
.submenu {
  display: flex;
  gap: 4px;
  padding: 0 0 17px 13px;
  font-size: 15px;
  line-height: 45px;
}
.filter-label, .filter-value {
  padding: 0 14px;
  background: #f4f5fa;
}
.filter-value { gap: 6px; padding-right: 12px; }
.filter-label { color: #29abe2; }
.caret.small { border-width: 3px 3px 0; }

.row {
  display: grid;
  margin-bottom: 14px;
}
.row .panel { margin-left: 14px; }
.row .handle + .panel { margin-left: 0; }
.row:first-of-type { grid-template-columns: 13px minmax(0, 463fr) repeat(3, minmax(0, 477fr)); }
.row:nth-of-type(2) { grid-template-columns: 13px minmax(0, 1fr); }
.row:nth-of-type(3) { grid-template-columns: 13px minmax(0, 940fr) minmax(0, 954fr); margin-bottom: 0; }

.handle {
  display: flex;
  flex-direction: column;
  gap: 1px;
  padding: 8px 0 0 4px;
}
.handle i { width: 5px; height: 5px; border-radius: 1px; background: #ddd; }

.panel {
  position: relative;
  border: 1px solid #f3f3f5;
  background: #fbfbfb;
}
.panel h2 { font-size: 17px; font-weight: 600; line-height: 22px; text-align: center; }
.grip { position: absolute; right: 0; bottom: 0; width: 12px; height: 12px; }

.stat, .clock { min-height: 150px; color: #555; font-weight: 700; text-align: center; }
.stat { padding-top: 7px; }
.stat p { padding-top: 38px; font-size: 40px; line-height: 48px; }
.clock p { padding-top: 49px; font-size: 48px; line-height: 50px; }

/* time series */
.graph { padding: 13px 47px 10px 5px; min-height: 300px; font-size: 14px; line-height: 18px; }
.plot { display: flex; gap: 10px; }
.y-axis {
  display: flex;
  flex-direction: column;
  justify-content: space-between;
  width: 32px;
  height: 229px;
  text-align: right;
}
.chart { flex: 1; min-width: 0; height: 212px; margin-top: 8px; overflow: visible; }
.chart path, .chart polyline { fill: none; vector-effect: non-scaling-stroke; }
.gridline { stroke: rgba(84, 84, 84, .1); stroke-width: 1; }
.series { stroke-width: 2.4; }
.series.bikes, .trend.bikes { stroke: #7eb26d; }
.series.docks, .trend.docks { stroke: #eab839; }
.trend { stroke-width: 1; opacity: .4; }
.forecast { stroke-dasharray: 12 12; }
.x-axis {
  display: grid;
  grid-template-columns: repeat(16, 1fr);
  margin-right: 42px;
  text-align: center;
}
.legend {
  display: flex;
  gap: 12px;
  padding: 10px 0 0 36px;
}
.legend li::before {
  content: "";
  display: inline-block;
  width: 15px;
  height: 4px;
  margin-right: 5px;
  border-radius: 1px;
  vertical-align: 3px;
}
.legend .bikes::before { background: #7eb26d; }
.legend .docks::before { background: #eab839; }

/* occupancy table */
.occupancy { min-height: 418px; padding-top: 7px; }
.table-area { position: relative; margin-top: 6px; border-top: 2px solid #fff; }
table { width: 100%; border-collapse: collapse; table-layout: fixed; }
.c-station { width: 353px; }
.c-bikes { width: 183px; }
.c-docks { width: 191px; }
th {
  height: 29px;
  padding: 7px 0 0 18px;
  background: #ebebeb;
  border-bottom: 1px solid #fff;
  color: #29abe2;
  font-size: 16px;
  line-height: 20px;
  text-align: left;
}
.caret.sort { border-width: 5px 5px 0; }
td {
  height: 43px;
  padding: 1px 0 0 18px;
  border-right: 3px solid #fff;
  border-bottom: 2px solid #fff;
}
td:last-child { border-right: 0; }
tbody::before { content: ""; display: table-row; height: 3px; }
.scrollbar {
  position: absolute;
  top: 34px;
  right: 0;
  bottom: -3px;
  width: 14px;
  padding: 4px 3px;
  background: #c3c4c3;
}
.thumb { width: 8px; height: 68px; border-radius: 4px; background: #7a7e80; }

/* map */
.map-panel { padding: 10px 12px 6px; }
.map { position: relative; height: 400px; overflow: hidden; background: #f5f5f3; }
.tiles { display: block; width: 100%; height: 100%; }
.park { fill: #e5eae8; }
.building { fill: #efefeb; }
.river { fill: none; stroke: #d1d5d8; }
.river .channel { stroke-width: 28; }
.river .creek { stroke-width: 16; }
.river .basin { fill: #d1d5d8; stroke: none; }
.street { fill: none; stroke: #d7d9d9; stroke-width: 3; }
.road-casing, .trunk-casing, .road-surface, .trunk-surface { fill: none; stroke-linejoin: round; }
.road-casing { stroke: #cacaca; stroke-width: 10; }
.road-surface { stroke: #fff; stroke-width: 6; }
.trunk-casing { stroke: #d4d4d4; stroke-width: 16; }
.trunk-surface { stroke: #fff; stroke-width: 12; }
.railway { fill: none; stroke: #dcdcdc; stroke-width: 6; stroke-dasharray: 30 10; }
.tiles text { paint-order: stroke; stroke: #fafafa; stroke-width: 5; }
.place { fill: #8696a3; font: 23px Lato, sans-serif; }
.street-name { fill: #b0b0b0; font: 21px Lato, sans-serif; }
.park-name { fill: #7f9d8b; font: italic 26px "Open Sans", sans-serif; }
.water-name { fill: #78909a; font: italic 20px "Open Sans", sans-serif; }
.tiles .park-name text, .tiles .water-name text { stroke: none; }
.marker { fill-opacity: .5; stroke-opacity: .55; stroke-width: 5; }
.marker.full { fill: #32ac2d; stroke: #32ac2d; }
.marker.mid { fill: #ed8128; stroke: #ed8128; }
.marker.low { fill: #f53636; stroke: #f53636; }

.zoom {
  position: absolute;
  top: 12px;
  left: 12px;
  width: 31px;
  border-radius: 4px;
  background: #fff;
  box-shadow: 0 1px 6px rgba(0, 0, 0, .65);
}
.zoom button {
  justify-content: center;
  width: 100%;
  height: 31px;
  color: #000;
  font: bold 22px/31px "Liberation Sans", Arial, sans-serif;
}
.zoom button + button { height: 32px; border-top: 1px solid #ccc; }
.map-legend {
  position: absolute;
  left: 12px;
  bottom: 12px;
  width: 88px;
  padding: 7px 9px 6px;
  border-radius: 5px;
  background: rgba(255, 255, 255, .88);
  box-shadow: 0 0 15px rgba(0, 0, 0, .2);
  font: 17px/22px "Liberation Sans", Arial, sans-serif;
}
.map-legend li { display: flex; gap: 10px; }
.map-legend li::before { content: ""; width: 22px; height: 22px; }
.map-legend .low::before { background: #f87a7c; }
.map-legend .mid::before { background: #f2ab72; }
.map-legend .full::before { background: #6dc56b; }
.attribution {
  position: absolute;
  right: 0;
  bottom: 0;
  padding: 0 7px 0 6px;
  background: rgba(255, 255, 255, .7);
  color: #333;
  font: 13px/20px "Liberation Sans", Arial, sans-serif;
}
.attribution a { color: #0078a8; text-decoration: none; }

/* edge of the collapsed side menu */
.side-shadow {
  position: absolute;
  top: 150px;
  bottom: 40px;
  left: -20px;
  width: 16px;
  box-shadow: 0 0 34px 2px rgba(0, 0, 0, .26);
  pointer-events: none;
}
```
